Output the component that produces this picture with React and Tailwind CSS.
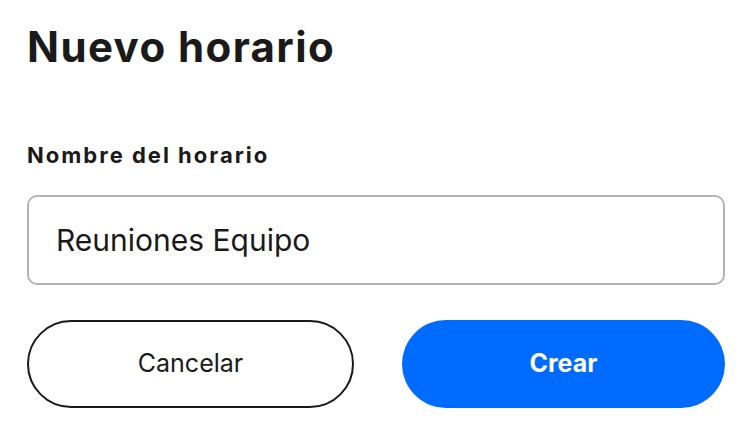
import React, { useState } from "react";

export default function App() {
  const [name, setName] = useState("Reuniones Equipo");

  return (
    <div className="w-[752px] h-[438px] bg-white px-[27px] text-[#1a1a1a]" style={{ fontFamily: "Inter, 'Noto Sans', sans-serif" }}>
      {/* Header */}
      <h1 className="pt-[23px] text-[42px] leading-[48px] font-bold tracking-[1.4px]">Nuevo horario</h1>

      {/* Field */}
      <label className="block mt-[71px] text-[22px] leading-[26px] font-bold tracking-[2px]">Nombre del horario</label>
      <input
        type="text"
        value={name}
        onChange={(e) => setName(e.target.value)}
        className="mt-[27px] w-full h-[90px] rounded-[10px] border-2 border-[#b3b3b3] px-[27px] text-[30px] text-[#1a1a1a] outline-none"
      />

      {/* Actions */}
      <div className="mt-[35px] flex gap-[48px]">
        <button className="flex-1 h-[88px] rounded-full border-2 border-[#1a1a1a] text-[25px] text-[#1a1a1a]">
          Cancelar
        </button>
        <button className="flex-1 h-[88px] rounded-full bg-[#006bff] text-[25px] font-bold text-white">
          Crear
        </button>
      </div>
    </div>
  );
}
